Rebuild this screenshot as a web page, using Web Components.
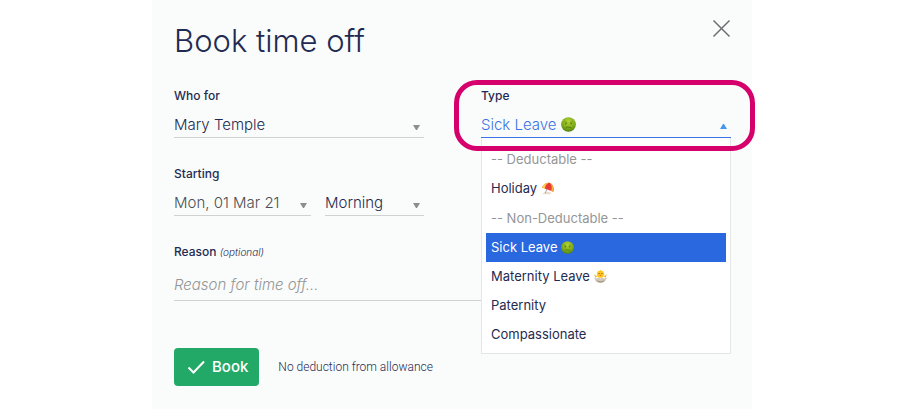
<!DOCTYPE html>
<html lang="en">
<head>
<meta charset="utf-8">
<title>Book time off</title>
<style>
:root{--ink:#1f2b52;--line:#cfd2d1;--muted:#949697;--blue:#3b72e4;--select:#2a68e0;--paper:#fafcfb;--green:#22a967}
body{margin:0;background:#fff;color:var(--ink);font-family:Inter,"Liberation Sans",sans-serif}
</style>
</head>
<body>
<time-off-dialog></time-off-dialog>
<script>
const define = (name, html, setup) => {
  const template = document.createElement('template');
  template.innerHTML = html;
  customElements.define(name, class extends HTMLElement {
    constructor() {
      super();
      this.attachShadow({mode: 'open'}).append(template.content.cloneNode(true));
    }
    connectedCallback() { if (setup) setup(this, this.shadowRoot); }
  });
};

const art = {
  sick: `<defs><radialGradient id="g" cx=".5" cy=".3" r=".75"><stop offset="0" stop-color="#b4d433"/><stop offset=".6" stop-color="#7cab1a"/><stop offset="1" stop-color="#47790c"/></radialGradient></defs>
    <circle cx="10" cy="10" r="9.800" fill="url(#g)"/><path d="M4.500 6.200q2-.4 3.600 1.300M15.500 6.200q-2-.4-3.600 1.300" fill="none" stroke="#6a9619" stroke-width="1" stroke-linecap="round"/><circle cx="6.500" cy="8.800" r="1.100" fill="#4f7612"/><circle cx="13.500" cy="8.800" r="1.100" fill="#4f7612"/><path d="M6.500 14.300q1.800-1.600 3.500-.8t3.500.8" fill="none" stroke="#4f7612" stroke-width="1.100" stroke-linecap="round"/>`,
  beach: `<path d="M2 17.500q7-4 14-1l-2 2.500H4z" fill="#e9dcc6"/><path d="M10.500 8L6.500 17" stroke="#a08e83" stroke-width="1.300"/><path d="M1.500 8.500C4 2 10 0 14 1.500 18.500 3.500 20.500 9 19 15z" fill="#ea3a35"/><path d="M1.500 8.500C3.500 3 8.500.8 13 1.300 8.500 2.500 6.500 5.500 6 10.200z" fill="#f9cf4b"/><path d="M13 1.300C18 3 20.500 9 19 15l-3.500-1.300C17.500 9 16.500 4 13 1.300z" fill="#f6b23f"/>`,
  chick: `<path d="M5 10L.5 6.500l1.300 5.500zM15 10l4.500-3.500-1.300 5.500z" fill="#f9b81c"/><circle cx="10" cy="6.500" r="5.600" fill="#ffc922"/><path d="M8.800 2L10-.2 11.200 2" fill="#f5b51e"/><circle cx="7.800" cy="5.500" r=".8" fill="#50351a"/><circle cx="12.200" cy="5.500" r=".8" fill="#50351a"/><path d="M8 7.300h4L10 10z" fill="#ef7d16"/><path d="M.8 11.500l3.400 1.700L7 11.500l3 1.700 3-1.700 2.800 1.700 3.400-1.700c0 5-4 8.200-9.200 8.200S.8 16.500.8 11.500z" fill="#d3c9bb"/><path d="M3 15.500q7 3.500 14 0-2 4-7 4t-7-4z" fill="#a99c8a"/>`
};

define('emoji-art', `
<style>:host{display:inline-block;width:var(--art,13px);height:var(--art,13px);vertical-align:-2px}svg{display:block;width:100%;height:100%}</style>
<svg viewBox="0 0 20 20" aria-hidden="true"></svg>`,
(host, root) => { root.querySelector('svg').innerHTML = art[host.getAttribute('name')]; });

define('drop-arrow', `
<style>:host{display:block;width:7px;height:5px;color:#8b8d8e;pointer-events:none}svg{display:block;width:100%;height:100%}:host([up]) svg{transform:scaleY(-1)}</style>
<svg viewBox="0 0 7 5" aria-hidden="true"><path d="M0 0h7L4 5H3z" fill="currentColor"/></svg>`);

const label = `label,.label{display:block;font-size:12px;line-height:16px;font-weight:500;margin-bottom:8px}`;
const box = `.box{display:grid;align-items:start;border-bottom:1px solid var(--line);height:25px}
.box>*{grid-area:1/1;min-width:0}
.box drop-arrow{justify-self:end;margin:13px 4px 0 0}
select,input,button{appearance:none;display:block;width:100%;height:25px;margin:0;padding:0;border:0;outline:0;background:none;color:inherit;font:300 15px/25px Inter,"Liberation Sans",sans-serif;text-align:left}`;

define('pick-field', `
<style>:host{display:block}${label}${box}</style>
<label for="c"></label>
<div class="box"><select id="c"><option></option></select><drop-arrow></drop-arrow></div>`,
(host, root) => {
  root.querySelector('label').textContent = host.getAttribute('label');
  root.querySelector('option').textContent = host.getAttribute('value');
});

define('start-field', `
<style>:host{display:block}${label}${box}
.row{display:flex;gap:14px}.date{flex:137;color:#4c4f54}.part{flex:99}</style>
<label for="d">Starting</label>
<div class="row">
<div class="box date"><input id="d" type="text" value="Mon, 01 Mar 21"><drop-arrow></drop-arrow></div>
<div class="box part"><select aria-label="Part of day"><option>Morning</option><option>Afternoon</option></select><drop-arrow></drop-arrow></div>
</div>`);

define('reason-field', `
<style>:host{display:block}${label}
em{font-size:10px;font-weight:300}
input{display:block;box-sizing:border-box;width:100%;height:33px;padding:0;border:0;border-bottom:1px solid var(--line);border-radius:0;outline:0;background:none;color:inherit;font:300 15px/25px Inter,"Liberation Sans",sans-serif}
input::placeholder{color:var(--muted);font-style:italic;opacity:1}</style>
<label for="r">Reason <em>(optional)</em></label><input id="r" type="text" placeholder="Reason for time off…">`);

define('menu-option', `
<style>:host{display:block;font:400 13px/29px Inter,"Liberation Sans",sans-serif;padding:0 5px;white-space:nowrap}
:host([heading]){line-height:30px;color:var(--muted)}
:host([aria-selected=true]){background:var(--select);color:#fff}</style><slot></slot>`);

define('type-field', `
<style>:host{display:block;position:relative}${label}${box}
.box{border-color:var(--blue)}button{color:var(--blue);cursor:pointer}.box drop-arrow{color:#4696ee;margin-top:12px}
.menu{position:absolute;z-index:1;top:100%;left:0;right:0;padding:6px 4px 4px;border:1px solid #e4e7e6;border-top:0;background:#fff}
.ring{position:absolute;z-index:2;inset:-8px -24px -13px -27px;border:5px solid #d6006c;border-radius:23px;pointer-events:none}</style>
<span class="label" id="l">Type</span>
<div class="box"><button type="button" role="combobox" aria-labelledby="l" aria-expanded="true" aria-controls="m"><slot name="value"></slot></button><drop-arrow up></drop-arrow></div>
<div class="menu" id="m" role="listbox" aria-labelledby="l"><slot></slot></div>
<div class="ring"></div>`);

define('close-button', `
<style>:host{display:block}button{display:block;padding:0;border:0;background:none;color:#6b6e70;cursor:pointer}svg{display:block}</style>
<button type="button" aria-label="Close"><svg width="19" height="19" viewBox="0 0 19 19" aria-hidden="true"><path d="M1.500 1.500l16 16M17.500 1.500l-16 16" stroke="currentColor" stroke-width="1.500"/></svg></button>`);

define('book-button', `
<style>:host{display:block}button{display:flex;align-items:center;gap:7px;height:38px;padding:0 11px 0 13px;border:0;border-radius:4px;background:var(--green);color:#fff;font:500 15px/20px Inter,"Liberation Sans",sans-serif;cursor:pointer}</style>
<button type="submit"><svg width="18" height="14" viewBox="0 0 18 14" aria-hidden="true"><path d="M1.500 7.500l5 5L17 1.500" fill="none" stroke="currentColor" stroke-width="2"/></svg><slot></slot></button>`);

define('time-off-dialog', `
<style>
:host{display:block;box-sizing:border-box;max-width:600px;min-height:100vh;margin:0 auto;padding:19px 21px 23px 22px;background:var(--paper)}
header{display:flex;justify-content:space-between;align-items:flex-start}
h1{margin:0;font-size:31px;line-height:44px;font-weight:300}
form{display:grid;grid-template-columns:1fr 1fr;gap:28px 57px;margin-top:25px}
reason-field,footer{grid-column:1/-1}
footer{display:flex;align-items:center;gap:19px;margin-top:19px}
p{margin:0;font:300 12px/16px Roboto,"Liberation Sans",sans-serif}
</style>
<header><h1>Book time off</h1><close-button></close-button></header>
<form>
<pick-field label="Who for" value="Mary Temple"></pick-field>
<type-field>
<span slot="value">Sick Leave <emoji-art name="sick" style="--art:15px"></emoji-art></span>
<menu-option heading role="presentation">-- Deductable --</menu-option>
<menu-option role="option">Holiday <emoji-art name="beach"></emoji-art></menu-option>
<menu-option heading role="presentation">-- Non-Deductable --</menu-option>
<menu-option role="option" aria-selected="true">Sick Leave <emoji-art name="sick"></emoji-art></menu-option>
<menu-option role="option">Maternity Leave <emoji-art name="chick"></emoji-art></menu-option>
<menu-option role="option">Paternity</menu-option>
<menu-option role="option">Compassionate</menu-option>
</type-field>
<start-field></start-field>
<reason-field></reason-field>
<footer><book-button>Book</book-button><p>No deduction from allowance</p></footer>
</form>`);
</script>
</body>
</html>
